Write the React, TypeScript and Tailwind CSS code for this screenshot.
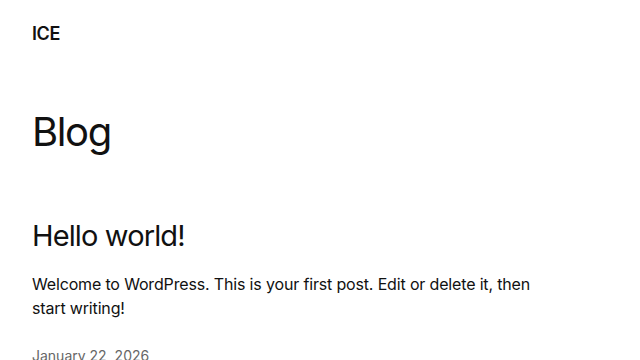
import React from 'react';

const font = { fontFamily: 'Inter, "Noto Sans", sans-serif' };

const App: React.FC = () => {
  return (
    <div className="min-h-screen bg-white text-[#111111]" style={font}>
      <header className="px-8 pt-[22px]">
        <a className="text-[18px] font-semibold leading-[22px] tracking-[-0.02em]">ICE</a>
      </header>

      <main className="px-8">
        <h1 className="mt-[62px] text-[40px] leading-[48px] font-normal tracking-[-0.035em]">Blog</h1>

        <article className="mt-[62px] max-w-[510px]">
          <h2 className="text-[29px] leading-[36px] font-normal tracking-[-0.03em]">Hello world!</h2>
          <p className="mt-[18px] text-[16px] leading-[24px] tracking-[-0.01em]">
            Welcome to WordPress. This is your first post. Edit or delete it, then start writing!
          </p>
          <p className="mt-[26px] text-[14px] leading-[20px] text-[#666666]">January 22, 2026</p>
        </article>
      </main>
    </div>
  );
};

export default App;
